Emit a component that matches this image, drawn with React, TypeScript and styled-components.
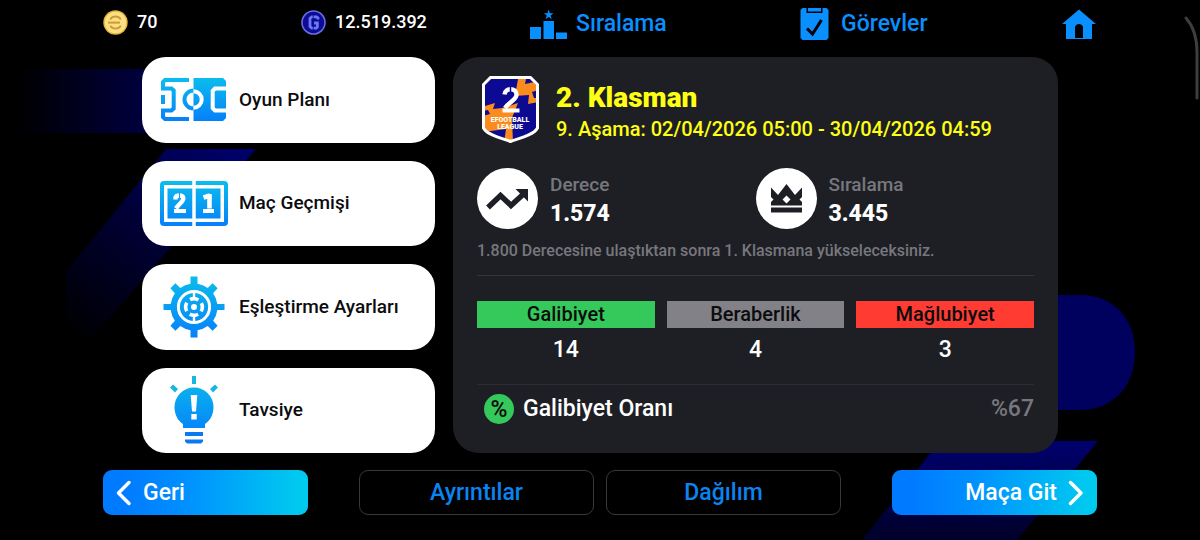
import React from "react";
import styled, { createGlobalStyle } from "styled-components";

const GlobalStyle = createGlobalStyle`
  *, *::before, *::after { box-sizing: border-box; }
  body {
    margin: 0;
    background: #000;
    color: #fff;
    font-family: Roboto, "Noto Sans", sans-serif;
    font-weight: 500;
  }
  h1, p, dl, dd { margin: 0; }
  button { font: inherit; border: 0; cursor: pointer; }
`;

const Screen = styled.div`
  position: relative;
  isolation: isolate;
  overflow: hidden;
  min-height: 100vh;
  padding: 0 103px 25px;
`;

const Backdrop = styled.svg`
  position: absolute;
  inset: 0;
  width: 100%;
  height: 100%;
  z-index: -1;
`;

const TopBar = styled.header`
  display: grid;
  grid-template-columns: 198fr 229fr 270fr 262fr 35fr;
  height: 57px;
  padding-top: 6px;
`;

const Balance = styled.div`
  display: flex;
  align-items: center;
  gap: 9px;
  height: 32px;
  font-size: 18px;
  line-height: 24px;
`;

const TopLink = styled.a`
  display: flex;
  align-items: center;
  gap: 9px;
  height: 36px;
  color: #0a8fff;
  font-size: 23px;
  line-height: 28px;
  text-decoration: none;
  white-space: nowrap;
`;

const Main = styled.main`
  display: grid;
  grid-template-columns: 293fr 605fr;
  gap: 18px;
  padding: 0 39px;
`;

const Menu = styled.nav`
  display: flex;
  flex-direction: column;
  gap: 18px;
`;

const MenuButton = styled.button`
  flex: 1;
  display: flex;
  align-items: center;
  gap: 11px;
  padding: 0 18px;
  border-radius: 24px;
  background: #fff;
  color: #0c0c0e;
  font-size: 19px;
  line-height: 24px;
  text-align: left;
`;

const MenuIcon = styled.span`
  display: grid;
  place-items: center;
  flex: none;
  width: 68px;
`;

const Panel = styled.section`
  display: flex;
  flex-direction: column;
  padding: 19px 24px 29px;
  border-radius: 26px;
  background: #1e1f25;
`;

const Division = styled.div`
  display: flex;
  gap: 17px;
  padding-left: 5px;
  height: 92px;
  color: #ffff14;
`;

const Title = styled.h1`
  padding-top: 6px;
  font-size: 28px;
  line-height: 32px;
  font-weight: 900;
`;

const Period = styled.p`
  font-size: 20px;
  line-height: 30px;
`;

const Stats = styled.div`
  display: grid;
  grid-template-columns: 1fr 1fr;
`;

const Stat = styled.div`
  display: flex;
  align-items: center;
  gap: 12px;
`;

const StatIcon = styled.span`
  display: grid;
  place-items: center;
  width: 61px;
  height: 61px;
  border-radius: 50%;
  background: #fff;
`;

const StatText = styled.dl`
  line-height: 29px;
`;

const StatLabel = styled.dt`
  color: #77777d;
  font-size: 19px;
`;

const StatValue = styled.dd`
  font-size: 23px;
  font-weight: 800;
`;

const Note = styled.p`
  padding: 10px 0 12px;
  border-bottom: 1px solid #34353b;
  color: #77777d;
  font-size: 16px;
  line-height: 24px;
`;

const Results = styled.dl`
  display: grid;
  grid-template-columns: repeat(3, 1fr);
  gap: 12px;
  padding: 25px 0 20px;
  border-bottom: 1px solid #2b2c33;
  text-align: center;
`;

const ResultLabel = styled.dt<{ $tone: string }>`
  background: ${(p) => p.$tone};
  color: #0c0c0e;
  font-size: 20px;
  line-height: 27px;
`;

const ResultValue = styled.dd`
  padding-top: 8px;
  font-size: 23px;
  line-height: 28px;
`;

const Rate = styled.div`
  display: flex;
  align-items: center;
  gap: 9px;
  padding: 8px 0 0 7px;
  font-size: 23px;
  line-height: 31px;
`;

const RateBadge = styled.span`
  display: grid;
  place-items: center;
  width: 30px;
  height: 30px;
  border-radius: 50%;
  background: #34c95a;
  color: #0c0c0e;
  font-size: 23px;
`;

const RateValue = styled.span`
  margin-left: auto;
  color: #77777d;
`;

const Footer = styled.footer`
  display: grid;
  grid-template-columns: 205fr 482fr 205fr;
  gap: 51px;
  padding-top: 17px;
  font-size: 23px;
  line-height: 28px;
`;

const Tabs = styled.div`
  display: grid;
  grid-template-columns: 1fr 1fr;
  gap: 12px;
`;

const OutlineButton = styled.button`
  height: 45px;
  border: 1px solid #38383b;
  border-radius: 9px;
  background: #000;
  color: #0a85f0;
`;

const ActionButton = styled.button<{ $end?: boolean }>`
  display: flex;
  align-items: center;
  justify-content: ${(p) => (p.$end ? "flex-end" : "flex-start")};
  gap: 11px;
  height: 45px;
  padding: 0 13px;
  border-radius: 9px;
  background: linear-gradient(90deg, #007bff 10%, #0090ff 40%, #00c9ef 95%);
  color: #fff;
`;

const SkyGradient = ({ id, height }: { id: string; height: number }) => (
  <linearGradient id={id} gradientUnits="userSpaceOnUse" x1="0" y1="0" x2="0" y2={height}>
    <stop offset="0" stopColor="#0bbdec" />
    <stop offset="1" stopColor="#0580fa" />
  </linearGradient>
);

const BackdropArt = () => (
  <Backdrop viewBox="0 0 1200 540" preserveAspectRatio="xMidYMid slice" aria-hidden="true">
    <defs>
      <linearGradient id="bar" x1="0" x2="1" y1="0" y2="0">
        <stop offset="0" stopColor="#000" />
        <stop offset="1" stopColor="#000046" />
      </linearGradient>
      <linearGradient id="slashLeft" gradientUnits="userSpaceOnUse" x1="230" y1="149" x2="75" y2="340">
        <stop offset="0" stopColor="#00006a" />
        <stop offset="0.45" stopColor="#000038" />
        <stop offset="1" stopColor="#000" />
      </linearGradient>
      <linearGradient id="slashRight" gradientUnits="userSpaceOnUse" x1="0" y1="441" x2="0" y2="540">
        <stop offset="0" stopColor="#00006e" />
        <stop offset="1" stopColor="#00002a" />
      </linearGradient>
    </defs>
    <path d="M16 69H160V133H16Z" fill="url(#bar)" />
    <path d="M166 149H256L80 352H66V272Z" fill="url(#slashLeft)" />
    <path d="M1040 295H1080C1115 295 1135 320 1135 352S1115 410 1080 410H1040Z" fill="#00005f" />
    <path d="M940 441H1098L1017 540H862Z" fill="url(#slashRight)" />
    <path d="M1186 18C1193 26 1197 38 1197 52V98" fill="none" stroke="#3d3d3d" strokeWidth="3" strokeLinecap="round" />
  </Backdrop>
);

const GoldCoin = () => (
  <svg width="25" height="25" viewBox="0 0 25 25" aria-hidden="true">
    <circle cx="12.5" cy="12.5" r="12.2" fill="#e3b33c" />
    <circle cx="12.5" cy="12.5" r="10.8" fill="#fbe083" />
    <g fill="none" stroke="#cf9a34" strokeWidth="1.8">
      <path d="M7.2 9.4A6.3 6.3 0 0 1 17.800 9.4" />
      <path d="M7.2 15.800A6.3 6.3 0 0 0 17.800 15.800" />
      <path d="M5 12.600H17" strokeWidth="2" />
    </g>
  </svg>
);

const BlueCoin = () => (
  <svg width="25" height="25" viewBox="0 0 25 25" aria-hidden="true">
    <circle cx="12.5" cy="12.5" r="11.5" fill="#0b0b96" stroke="#6c6cdd" strokeWidth="1.6" />
    <path d="M17 9.500V8L15.500 6.800H10.800L9 8.400V16.600L10.800 18.200H15.300L16.400 17V13H13" fill="none" stroke="#6d78f0" strokeWidth="2.8" />
    <path d="M12.200 5V9M12.200 16V20" stroke="#0b0b96" strokeWidth="0.8" />
  </svg>
);

const PodiumIcon = () => (
  <svg width="37" height="31" viewBox="0 0 37 31" fill="currentColor" aria-hidden="true">
    <path d="M0 18H11V30H0ZM13.5 12H24V30H13.5ZM26 23.500H37V30H26Z" />
    <path d="M18.700 0.500L19.900 4.300H23.600L20.600 6.500L21.700 10.200L18.700 8L15.700 10.200L16.800 6.500L13.800 4.300H17.500Z" />
  </svg>
);

const ClipboardIcon = () => (
  <svg width="32" height="34" viewBox="0 0 32 34" aria-hidden="true">
    <path d="M2.500 1H6.500V6H22.500V1H26.500L28.500 3V31L26.500 33H2.500L0.500 31V3Z" fill="currentColor" />
    <path d="M8 1H21V4.500H8Z" fill="currentColor" />
    <path d="M7 21.500L12.500 27L21.500 13" fill="none" stroke="#000" strokeWidth="3" />
  </svg>
);

const HomeIcon = () => (
  <svg width="34" height="31" viewBox="0 0 34 31" fill="currentColor" aria-hidden="true">
    <path fillRule="evenodd" d="M17 0.500L34 15H30V30H4V15H0ZM13 29H21V18.500C21 13.700 13 13.700 13 18.500Z" />
  </svg>
);

const PitchIcon = () => (
  <svg width="66" height="43" viewBox="0 0 66 43" aria-hidden="true">
    <defs>
      <SkyGradient id="pitch" height={43} />
    </defs>
    <path d="M28 2H4L2 4V10.500H10.500L12.700 12.500V30.500L10.500 32.500H2V39L4 41H28" fill="none" stroke="url(#pitch)" strokeWidth="4" />
    <path d="M0 17H4V26H0Z" fill="url(#pitch)" />
    <path d="M32.500 0H62L65 3V40L62 43H32.500Z" fill="url(#pitch)" />
    <path d="M32.500 12.500A9 9 0 0 0 32.500 30.500" fill="none" stroke="url(#pitch)" strokeWidth="4" />
    <path d="M32.500 13.300A8.200 8.200 0 0 1 32.500 29.700" fill="none" stroke="#fff" strokeWidth="4" />
    <path d="M66 10.500H54L51.700 12.800V30.200L54 32.500H66" fill="none" stroke="#fff" strokeWidth="4" />
  </svg>
);

const ScoreIcon = () => (
  <svg width="68" height="45" viewBox="0 0 68 45" aria-hidden="true">
    <defs>
      <SkyGradient id="score" height={45} />
    </defs>
    <rect x="2" y="2" width="64" height="41" rx="2" fill="none" stroke="url(#score)" strokeWidth="4" />
    <rect x="7.500" y="7.500" width="53" height="30" fill="url(#score)" />
    <path d="M34 0V45" stroke="#fff" strokeWidth="3.500" />
    <g fill="none" stroke="#fff">
      <path d="M15.500 18.500V16.500C16.500 13.800 23.300 13.500 23.300 17.500C23.300 21 19 22.500 16 27.500" strokeWidth="4.400" />
      <path d="M14 30H26M43 30H54" strokeWidth="3.800" />
      <path d="M49.500 13V27.500M43.500 16.500L50 14.500" strokeWidth="4.600" />
    </g>
    <path d="M19.500 12V18" stroke="#0a9ff5" strokeWidth="1" />
  </svg>
);

const GearIcon = () => (
  <svg width="62" height="62" viewBox="-31 -31 62 62" aria-hidden="true">
    <defs>
      <linearGradient id="gear" gradientUnits="userSpaceOnUse" x1="0" y1="-31" x2="0" y2="31">
        <stop offset="0" stopColor="#0bbdec" />
        <stop offset="1" stopColor="#0580fa" />
      </linearGradient>
    </defs>
    <path
      fill="url(#gear)"
      d="M-3.500 -30.500H3.500V-23.300A23.500 23.500 0 0 1 13.700 -19.100L18.600 -23.800L23.600 -18.800L19.100 -13.700A23.500 23.500 0 0 1 23.300 -3H30.500V3H23.300A23.500 23.500 0 0 1 19.100 13.700L23.600 18.800L18.600 23.800L13.700 19.100A23.500 23.500 0 0 1 3.500 23.300V30.500H-3.500V23.300A23.500 23.500 0 0 1 -13.700 19.100L-18.600 23.800L-23.600 18.800L-19.100 13.700A23.500 23.500 0 0 1 -23.300 3H-30.500V-3H-23.300A23.500 23.500 0 0 1 -19.100 -13.700L-23.600 -18.800L-18.600 -23.800L-13.700 -19.100A23.500 23.500 0 0 1 -3.500 -23.300Z"
    />
    <circle r="15.600" fill="none" stroke="#fff" strokeWidth="3" />
    <circle r="8.300" fill="none" stroke="#fff" strokeWidth="3.600" strokeDasharray="8.540 4.500" strokeDashoffset="-2.250" transform="rotate(45)" />
    <path d="M0 -15V-7M0 7V15" stroke="#fff" strokeWidth="2.400" />
    <circle r="3" fill="#fff" />
  </svg>
);

const BulbIcon = () => (
  <svg width="50" height="70" viewBox="0 0 50 70" aria-hidden="true">
    <defs>
      <SkyGradient id="bulb" height={60} />
    </defs>
    <path d="M14 53V49C8.500 45.500 5.500 39 5.500 32A19.500 19.500 0 0 1 44.500 32C44.500 39 41.500 45.500 36 49V53Z" fill="url(#bulb)" />
    <path d="M16 57H34V61H16ZM16 64.500H34V66.500L32 68.500H18L16 66.500Z" fill="#0a7bee" />
    <path d="M23 1H27V9H23ZM1 12.500L4 9.500L9 14L6 17.500ZM49 12.500L46 9.500L41 14L44 17.500Z" fill="#19b6e2" />
    <path d="M21.700 20H28.300L27 36.500H23ZM22.300 39H27.700V44.500H22.300Z" fill="#fff" />
  </svg>
);

const LeagueBadge = () => (
  <svg width="57" height="67" viewBox="0 0 57 67" role="img" aria-label="eFootball League 2">
    <defs>
      <clipPath id="shield">
        <path d="M9 3H48L54 9V52C51 58 39 61 28.500 65C18 61 6 58 3 52V9Z" />
      </clipPath>
    </defs>
    <g clipPath="url(#shield)">
      <path d="M0 0H57V67H0Z" fill="#0c0a93" />
      <g fill="#f98c1c">
        <path d="M36 3H44L43 8L57 5V14L50 16L52 22H57V26L46 28L47 19L33 20Z" />
        <path d="M0 31L13 27L11 33L20 32L36 27L30 42L31 67H22L24 53L0 56V40L8 38L6 34L0 35Z" />
      </g>
    </g>
    <path d="M8.500 1.500H48.500L55.500 8.500V52C52 58.500 40 61.500 28.500 65.500C17 61.500 5 58.500 1.500 52V8.500Z" fill="none" stroke="#fff" strokeWidth="3" />
    <g fill="none" stroke="#fff">
      <path d="M22.500 18.500C23 11.500 34.500 11.500 34.500 18.500C34.500 24 27 26 23 32" strokeWidth="4.400" />
      <path d="M20.500 34.500H37.500" strokeWidth="4" />
    </g>
    <path d="M28.500 11V16" stroke="#0c0a93" strokeWidth="1.500" />
    <g fill="#fff" fontSize="7" fontWeight="900" textAnchor="middle">
      <text x="28" y="46">EFOOTBALL</text>
      <text x="28" y="53">LEAGUE</text>
    </g>
  </svg>
);

const TrendIcon = () => (
  <svg width="43" height="22" viewBox="0 0 43 22" aria-hidden="true">
    <path d="M2 19.500L14.500 7.500L25 17.500L37.500 6" fill="none" stroke="#1e1f25" strokeWidth="5.500" />
    <path d="M29.500 1H42V13.500Z" fill="#1e1f25" />
  </svg>
);

const CrownIcon = () => (
  <svg width="31" height="29" viewBox="0 0 31 29" fill="#1e1f25" aria-hidden="true">
    <path fillRule="evenodd" d="M0 3.500L7 11L15.500 0L24 11L31 3.500V13L28.500 15.500L31 18V21.500H0V18L2.500 15.500L0 13ZM15.500 11.500L11.500 15.500L15.500 19.500L19.500 15.500Z" />
    <path d="M0 23.500H31V28.500H0Z" />
  </svg>
);

const Chevron = ({ right }: { right?: boolean }) => (
  <svg width="16" height="26" viewBox="0 0 16 26" fill="none" stroke="#fff" strokeWidth="3.500" strokeLinecap="round" strokeLinejoin="round" aria-hidden="true">
    <path d={right ? "M2.500 2.500L13 13L2.500 23.500" : "M13 2.500L2.500 13L13 23.500"} />
  </svg>
);

const menu = [
  { label: "Oyun Planı", icon: <PitchIcon /> },
  { label: "Maç Geçmişi", icon: <ScoreIcon /> },
  { label: "Eşleştirme Ayarları", icon: <GearIcon /> },
  { label: "Tavsiye", icon: <BulbIcon /> },
];

const stats = [
  { label: "Derece", value: "1.574", icon: <TrendIcon /> },
  { label: "Sıralama", value: "3.445", icon: <CrownIcon /> },
];

const results = [
  { label: "Galibiyet", value: 14, tone: "#34c95a" },
  { label: "Beraberlik", value: 4, tone: "#828187" },
  { label: "Mağlubiyet", value: 3, tone: "#ff3b32" },
];

export default function App() {
  return (
    <Screen>
      <GlobalStyle />
      <BackdropArt />
      <TopBar>
        <Balance><GoldCoin />70</Balance>
        <Balance><BlueCoin />12.519.392</Balance>
        <TopLink href="#ranking"><PodiumIcon />Sıralama</TopLink>
        <TopLink href="#missions"><ClipboardIcon />Görevler</TopLink>
        <TopLink href="#home" aria-label="Ana sayfa"><HomeIcon /></TopLink>
      </TopBar>
      <Main>
        <Menu>
          {menu.map((item) => (
            <MenuButton key={item.label} type="button">
              <MenuIcon>{item.icon}</MenuIcon>
              {item.label}
            </MenuButton>
          ))}
        </Menu>
        <Panel>
          <Division>
            <LeagueBadge />
            <div>
              <Title>2. Klasman</Title>
              <Period>9. Aşama: 02/04/2026 05:00 - 30/04/2026 04:59</Period>
            </div>
          </Division>
          <Stats>
            {stats.map((stat) => (
              <Stat key={stat.label}>
                <StatIcon>{stat.icon}</StatIcon>
                <StatText>
                  <StatLabel>{stat.label}</StatLabel>
                  <StatValue>{stat.value}</StatValue>
                </StatText>
              </Stat>
            ))}
          </Stats>
          <Note>1.800 Derecesine ulaştıktan sonra 1. Klasmana yükseleceksiniz.</Note>
          <Results>
            {results.map((result) => (
              <div key={result.label}>
                <ResultLabel $tone={result.tone}>{result.label}</ResultLabel>
                <ResultValue>{result.value}</ResultValue>
              </div>
            ))}
          </Results>
          <Rate>
            <RateBadge aria-hidden="true">%</RateBadge>
            Galibiyet Oranı
            <RateValue>%67</RateValue>
          </Rate>
        </Panel>
      </Main>
      <Footer>
        <ActionButton type="button"><Chevron />Geri</ActionButton>
        <Tabs>
          <OutlineButton type="button">Ayrıntılar</OutlineButton>
          <OutlineButton type="button">Dağılım</OutlineButton>
        </Tabs>
        <ActionButton type="button" $end>Maça Git<Chevron right /></ActionButton>
      </Footer>
    </Screen>
  );
}
